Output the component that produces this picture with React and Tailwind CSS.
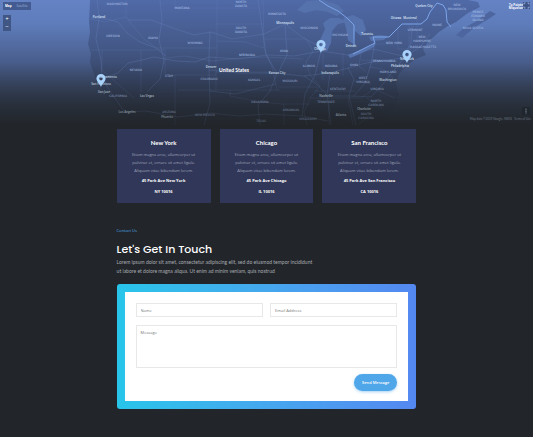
import React from "react";

const land =
  "M90 0 L89 22 L90 32 L88 44 L91 54 L90 62 L94 74 L98 84 L104 92 L108 99 L116 106 L122 118 L128 125 L384 125 L388 114 L395 106 L399 95 L396 84 L399 74 L407 65 L416 59 L426 55 L423 49 L428 42 L439 32 L448 26 L456 22 L468 13 L480 7 L478 2 L468 0 Z";

const lakes = [
  "M297 10 L307 1 L324 0 L338 5 L344 11 L337 16 L328 12 L316 10 L305 13 Z",
  "M323 23 L330 18 L339 18 L347 22 L338 24 L332 31 L331 43 L327 51 L321 50 L320 40 L325 29 Z",
  "M343 18 L353 15 L363 20 L366 30 L361 36 L355 31 L353 44 L348 40 L346 28 Z",
  "M348 55 L363 49 L376 43 L374 47 L360 54 L350 58 Z",
  "M369 37 L379 35 L388 36 L384 40 L371 41 Z",
];

const islands = ["M456 35 L464 28 L475 22 L490 11 L496 14 L487 20 L475 27 L462 38 Z"];

const borders = [
  "M90 19 L105 22 L126 17 M91 50 H165 M126 0 V17 L133 26 L145 40 L157 48",
  "M165 50 V75 M102 50 V70 L134 98 M141 50 V92 M165 75 H216 M175 75 V125",
  "M157 48 H217 M175 0 V8 H261 M217 0 V56 M217 24 H263 M217 41 L245 42 L264 48",
  "M165 58 L185 56 L212 61 L240 58 L266 57 M216 56 V90 M216 72 H275",
  "M216 90 H280 M178 90 H216 M230 90 V96 L260 102 L283 104 M263 0 L264 48 L272 67 L277 90",
  "M264 39 H306 M266 57 L303 59 M306 39 L313 51 L306 62 L310 75 L320 86 L310 98 L304 112 L307 125",
  "M278 87 H318 M283 104 H310 M284 104 V125 M323 53 V80 M343 53 V76 M361 53 L359 66 L366 72",
  "M310 98 H362 M315 91 H355 M329 98 V125 M348 98 L353 125 M362 97 L374 89 L395 98",
  "M361 60 L397 61 M373 44 H397 M398 28 V49 M409 24 V50 M417 15 V40 M398 49 H416",
  "M370 67 L382 69 L393 78 M354 81 L371 84 M367 98 L382 108 M358 125 L371 114",
];

const roads = [
  "M91 18 L107 19 L118 22 L127 33 L140 42 L156 48 L166 56",
  "M97 0 L99 19 L96 39 L101 60 L102 78 L110 91 L124 111",
  "M102 78 L118 73 L128 63 L142 60 L154 57 L176 61 L195 62 L209 57 L238 59 L268 55 L294 56 L321 51 L348 55 L373 49 L403 56",
  "M128 20 L151 20 L173 28 L194 35 L211 32 L232 39 L264 34 L285 24 L302 37 L320 47",
  "M147 92 L160 79 L164 60 L159 40 L162 20 L160 0",
  "M125 112 L146 111 L178 117 L211 113 L239 116 L265 114 L302 116 L328 121",
  "M209 70 L240 73 L276 73 L303 76 L329 73 L348 68 L366 63 L403 58",
  "M210 32 L209 57 L209 72 L210 103 L204 125 M258 0 L263 34 L266 55 L277 73 L270 91 L258 105 L260 125",
  "M285 24 L287 55 L278 73 M321 51 L315 75 L305 94 L302 116 M330 73 L327 96 L331 125",
  "M348 68 L354 79 L349 96 L356 125 M371 97 L383 84 L390 75 L404 58 L420 47 L430 34",
  "M210 91 L235 94 L259 88 L276 84 M304 76 L315 83 L329 96 L353 96 L371 97",
  "M373 34 L374 48 L371 64 L365 83 L353 97 M403 57 L411 43 L412 26",
];

const labels = [
  [117, 5, "WASHINGTON"], [113, 37, "OREGON"], [153, 39, "IDAHO"],
  [182, 9, "MONTANA"], [136, 71, "NEVADA"], [169, 77, "UTAH"],
  [118, 97, "CALIFORNIA"], [169, 113, "ARIZONA"],
  [241, 3, "NORTH"], [241, 7, "DAKOTA"], [241, 29, "SOUTH"], [241, 33, "DAKOTA"],
  [195, 44, "WYOMING"], [247, 56, "NEBRASKA"], [209, 80, "COLORADO"],
  [254, 81, "KANSAS"], [260, 103, "OKLAHOMA"], [205, 116, "NEW MEXICO"], [261, 122, "TEXAS"],
  [277, 15, "MINNESOTA"], [309, 29, "WISCONSIN"], [284, 52, "IOWA"],
  [340, 36, "MICHIGAN"], [309, 67, "ILLINOIS"], [331, 67, "INDIANA"],
  [354, 66, "OHIO"], [290, 82, "MISSOURI"], [338, 90, "KENTUCKY"],
  [326, 103, "TENNESSEE"], [291, 111, "ARKANSAS"], [308, 120, "MISSISSIPPI"],
  [437, 26, "MAINE"], [415, 31, "VERMONT"], [422, 38, "NEW"], [422, 42, "HAMPSHIRE"],
  [423, 48, "MASSACHUSETTS"], [394, 44, "NEW YORK"], [384, 62, "PENNSYLVANIA"],
  [388, 73, "MARYLAND"], [363, 79, "WEST"], [363, 83, "VIRGINIA"],
  [377, 90, "VIRGINIA"], [376, 102, "NORTH"], [376, 106, "CAROLINA"],
  [366, 115, "SOUTH"], [366, 119, "CAROLINA"], [457, 6, "NEW"], [457, 10, "BRUNSWICK"],
  [478, 13, "PRINCE"], [478, 17, "EDWARD"], [478, 21, "ISLAND"], [473, 29, "NOVA SCOTIA"],
];

const cities = [
  [99, 18, "Portland"], [108, 78, "Sacramento"], [101, 85, "San Francisco"],
  [104, 93, "San Jose"], [147, 97, "Las Vegas"], [127, 113, "Los Angeles"],
  [167, 118, "Phoenix"], [211, 68, "Denver"], [285, 24, "Minneapolis"],
  [277, 74, "Kansas City"], [330, 74, "Indianapolis"], [326, 97, "Nashville"],
  [341, 116, "Atlanta"], [351, 47, "Detroit"], [320, 50, "Chicago"],
  [367, 35, "Toronto"], [396, 19, "Ottawa"], [410, 19, "Montreal"],
  [424, 7, "Quebec City"], [407, 60, "New York"], [400, 67, "Philadelphia"],
  [388, 81, "Washington"], [364, 110, "Charlotte"],
];

const offices = [
  { city: "New York", street: "45 Park Ave New York", zip: "NY 10016" },
  { city: "Chicago", street: "45 Park Ave Chicago", zip: "IL 10016" },
  { city: "San Francisco", street: "45 Park Ave San Francisco", zip: "CA 10016" },
];

function Pin({ x, y }) {
  return (
    <g transform={`translate(${x} ${y})`}>
      <path
        fillRule="evenodd"
        fill="#a9d2fb"
        d="M0 0 C-1 -3 -4.6 -5.5 -4.6 -8.4 A4.6 4.6 0 0 1 4.6 -8.4 C4.6 -5.5 1 -3 0 0 Z M0 -10.2 A1.8 1.8 0 1 0 0 -6.6 A1.8 1.8 0 1 0 0 -10.2 Z"
      />
    </g>
  );
}

function MapDrawing() {
  return (
    <svg
      viewBox="0 0 533 125"
      preserveAspectRatio="xMidYMid slice"
      className="block h-full w-full"
      role="img"
      aria-label="Map of the United States"
    >
      <defs>
        <linearGradient id="sea" x1="0" y1="0" x2="0" y2="1">
          <stop offset="0" stopColor="#6583c4" />
          <stop offset="0.2" stopColor="#5e7cba" />
          <stop offset="0.5" stopColor="#485d8b" />
          <stop offset="0.8" stopColor="#303b4f" />
          <stop offset="1" stopColor="#22262b" />
        </linearGradient>
        <linearGradient id="ground" x1="0" y1="0" x2="0" y2="1">
          <stop offset="0" stopColor="#506aa8" />
          <stop offset="0.35" stopColor="#455a8a" />
          <stop offset="0.65" stopColor="#364464" />
          <stop offset="1" stopColor="#22262b" />
        </linearGradient>
        <linearGradient id="fade" x1="0" y1="0" x2="0" y2="1">
          <stop offset="0.5" stopColor="#22262b" stopOpacity="0" />
          <stop offset="1" stopColor="#22262b" stopOpacity="0.6" />
        </linearGradient>
      </defs>
      <rect width="533" height="125" fill="url(#sea)" />
      <svg width="533" height="125">
        <path d={land} fill="url(#ground)" />
        {islands.map((d) => <path key={d} d={d} fill="#4d66a0" />)}
        {lakes.map((d) => <path key={d} d={d} fill="#5672ad" />)}
        <g fill="none" stroke="#7190ca">
          {borders.map((d) => <path key={d} d={d} strokeWidth="0.4" opacity="0.4" />)}
          {roads.map((d) => <path key={d} d={d} strokeWidth="0.6" opacity="0.4" />)}
        </g>
        <path
          d="M319 0 L328 6 L338 11 L347 18 L354 25 L354 46 M353 54 L365 48 L375 43 L373 37 L389 37 L396 30 L402 24 L421 24 L427 19 L430 12 L437 3 L443 5 L446 10 L447 22 L451 27"
          fill="none"
          stroke="#7ba4eb"
          strokeWidth="1"
        />
      </svg>
      <g textAnchor="middle">
        <g fill="#adc1e8" className="font-['DejaVu_Sans',sans-serif] text-[3px]">
          {labels.map(([x, y, name]) => <text key={`${x}-${y}`} x={x} y={y}>{name}</text>)}
        </g>
        <g fill="#dce6f8" className="font-['Open_Sans',sans-serif] text-[3px] font-semibold">
          {cities.map(([x, y, name]) => <text key={name} x={x} y={y}>{name}</text>)}
        </g>
      </g>
      <rect width="533" height="125" fill="url(#fade)" />
      <text x="234" y="72" textAnchor="middle" fill="#fff" className="font-[Lato,sans-serif] text-[5px] font-bold">
        United States
      </text>
      <Pin x={101} y={87} />
      <Pin x={321} y={53} />
      <Pin x={407} y={63} />
    </svg>
  );
}

function MapSection() {
  return (
    <section className="relative h-[125px]">
      <MapDrawing />
      <div className="absolute top-[2px] left-[3px] flex h-2 bg-[#435b91] text-[3px] leading-[8px] text-[#a5b9df]">
        <button type="button" className="px-[2px] font-bold text-white">Map</button>
        <button type="button" className="px-[3px]">Satellite</button>
      </div>
      <div className="absolute top-[15px] left-[3px] flex w-2 flex-col bg-[#405684] text-[6px] leading-[8px] text-white">
        <button type="button" aria-label="Zoom in">+</button>
        <button type="button" aria-label="Zoom out">−</button>
      </div>
      <div className="absolute top-[4px] right-[10px] text-right text-[3px] leading-[3px] font-bold text-white">
        To Pointe<br />Miquelon
      </div>
      <button type="button" aria-label="Toggle fullscreen" className="absolute top-[2px] right-[3px] size-[7px] bg-[#3d5487]">
        <svg viewBox="0 0 7 7" fill="none" stroke="#b5c9ee" strokeWidth="0.7">
          <path d="M1 2.5V1H2.5M4.5 1H6V2.5M6 4.5V6H4.5M2.5 6H1V4.5" />
        </svg>
      </button>
      <button type="button" aria-label="Street view" className="absolute right-[3px] bottom-[10px] size-2 bg-[#20262d]">
        <svg viewBox="0 0 8 8" fill="#4a525e">
          <circle cx="4" cy="2.2" r="1" />
          <path d="M3 3.5H5V5H4.6V7H3.4V5H3Z" />
        </svg>
      </button>
      <div className="absolute right-[2px] bottom-[4px] flex gap-[2px] font-[Lato,sans-serif] text-[3px] leading-[4px] text-[#68717f]">
        <span>Map data ©2019 Google, INEGI</span>
        <a href="#terms">Terms of Use</a>
      </div>
    </section>
  );
}

export default function App() {
  return (
    <main className="min-h-screen bg-[#22262b] font-['Open_Sans','Noto_Sans',sans-serif] text-white">
      <MapSection />
      <div className="mx-auto w-9/16 pt-1 pb-7">
        <section className="grid grid-cols-3 gap-[9px]">
          {offices.map(({ city, street, zip }) => (
            <article key={city} className="h-[74px] bg-[#303758] pt-2 text-center">
              <h3 className="font-[Lato,sans-serif] text-[6px] leading-[12px] font-bold">{city}</h3>
              <p className="pt-[2px] text-[4px] leading-[8px] text-[#a0a5bc]">
                Etiam magna arcu, ullamcorper ut<br />pulvinar et, ornare sit amet ligula.<br />Aliquam vitae bibendum lorem.
              </p>
              <p className="pt-px text-[4px] leading-[9px] font-bold">{street}</p>
              <p className="pt-[2px] text-[4px] leading-[9px] font-bold">{zip}</p>
            </article>
          ))}
        </section>
        <section className="pt-6">
          <p className="text-[4px] leading-[8px] text-[#4da9ea]">Contact Us</p>
          <h2 className="pt-2 font-[Poppins,Inter,sans-serif] text-[11px] leading-[12px] font-medium">Let's Get In Touch</h2>
          <p className="pt-[3px] font-[Lato,sans-serif] text-[5px] leading-[9px] text-[#a8abaf]">
            Lorem ipsum dolor sit amet, consectetur adipiscing elit, sed do eiusmod tempor incididunt<br />
            ut labore et dolore magna aliqua. Ut enim ad minim veniam, quis nostrud
          </p>
          <div className="mt-2 rounded-[3px] bg-linear-to-r from-[#27c5ea] to-[#5488f1] p-2">
            <form className="grid grid-cols-2 gap-x-[7px] gap-y-2 bg-white px-[11px] pt-[11px] pb-[10px]" onSubmit={(e) => e.preventDefault()}>
              <input aria-label="Name" placeholder="Name" className="h-[14px] min-w-0 border border-[#e8e8e8] px-1 text-[4px] text-[#777] placeholder:text-[#777]" />
              <input aria-label="Email Address" type="email" placeholder="Email Address" className="h-[14px] min-w-0 border border-[#e8e8e8] px-1 text-[4px] text-[#777] placeholder:text-[#777]" />
              <textarea aria-label="Message" placeholder="Message" className="col-span-2 block h-[43px] resize-none border border-[#e8e8e8] px-1 py-1 text-[4px] leading-[6px] text-[#777] placeholder:text-[#777]" />
              <button type="submit" className="col-span-2 -mt-[2px] h-[17px] justify-self-end rounded-full bg-[#4fa6e9] px-2 text-[4px] font-semibold text-white shadow-[0_1px_3px_rgba(79,166,233,0.5)]">
                Send Message
              </button>
            </form>
          </div>
        </section>
      </div>
    </main>
  );
}
